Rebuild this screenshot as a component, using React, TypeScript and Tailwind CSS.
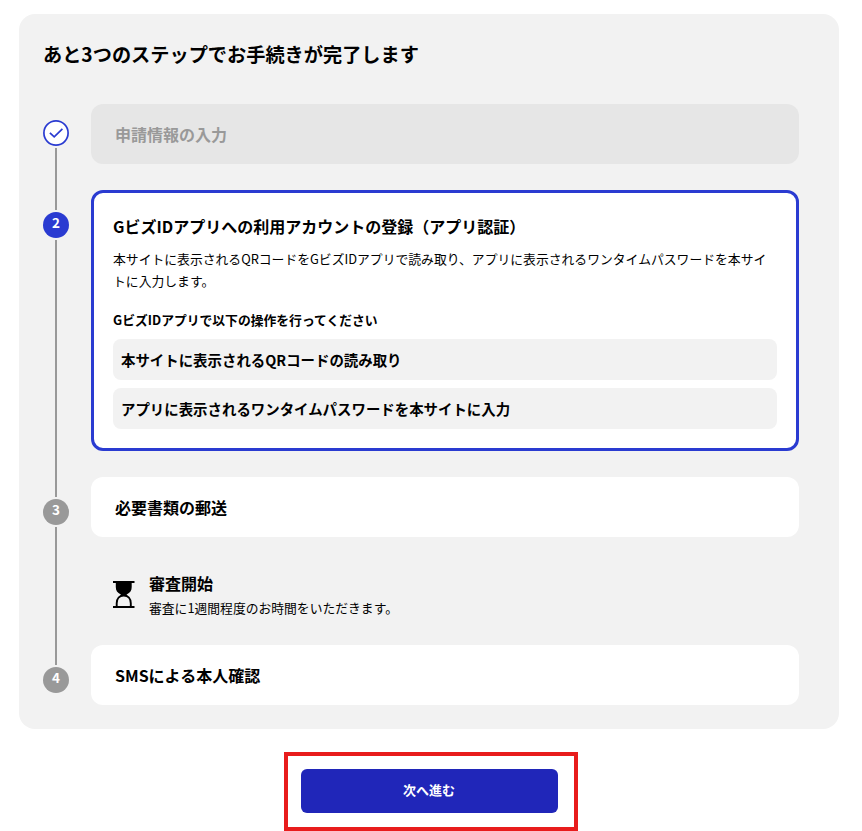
import type { ReactNode } from 'react';
import clsx from 'clsx';

interface MarkerProps {
  status: 'done' | 'current' | 'upcoming';
  children?: ReactNode;
}

function StepMarker({ status, children }: MarkerProps) {
  if (status === 'done') {
    return (
      <svg className="block shrink-0" width="26" height="26" viewBox="0 0 26 26" fill="none">
        <circle cx="13" cy="13" r="12.1" fill="#fff" stroke="#2a3bd1" strokeWidth="1.7" />
        <path d="M6.9 12.8l4.3 4.1 8.2-8.1" stroke="#2a3bd1" strokeWidth="1.7" />
      </svg>
    );
  }

  return (
    <div
      className={clsx(
        'flex h-[26px] w-[26px] shrink-0 justify-center rounded-full text-[13.5px] leading-[21px] font-bold text-white',
        status === 'current' ? 'bg-[#2a3bd1]' : 'bg-[#999999]'
      )}
    >
      {children}
    </div>
  );
}

function Connector({ className }: { className: string }) {
  return <div className={clsx('my-0.5 w-0.5 shrink-0 bg-[#999999]', className)} />;
}

function StepCard({ title, done = false }: { title: string; done?: boolean }) {
  return (
    <div
      className={clsx(
        'flex h-[60px] items-center rounded-xl px-6 text-base font-bold',
        done ? 'bg-[#e6e6e6] text-[#999999]' : 'bg-white'
      )}
    >
      {title}
    </div>
  );
}

function HourglassIcon() {
  return (
    <svg className="mt-1 block shrink-0" width="22" height="27" viewBox="0 0 22 27" fill="none">
      <path d="M2.8 1h15.900v5c0 3.500-1.500 5.700-5 7.500v1H7.800v-1c-3.500-1.800-5-4-5-7.500z" fill="#000" />
      <path
        d="M3.700 26v-3.800c0-4.700 2.800-7.700 7.050-7.700s7.050 3 7.050 7.700V26"
        fill="#f2f2f2"
        stroke="#000"
        strokeWidth="1.900"
      />
      <path d="M0 1h21.500M0 26h21.500" stroke="#000" strokeWidth="2" />
    </svg>
  );
}

const operations = [
  '本サイトに表示されるQRコードの読み取り',
  'アプリに表示されるワンタイムパスワードを本サイトに入力',
];

export default function App() {
  return (
    <div className="h-[831px] w-[862px] overflow-hidden bg-white pt-3.5 pl-[19px] font-['Noto_Sans_CJK_JP',sans-serif] text-black">
      <main className="h-[715px] w-[820px] rounded-2xl bg-[#f2f2f2] pt-6 pr-10 pl-6">
        <h1 className="h-[66px] text-[19.2px] leading-[33px] font-bold">
          あと3つのステップでお手続きが完了します
        </h1>

        <div className="flex gap-[22px]">
          {/* タイムライン */}
          <div className="flex w-[26px] shrink-0 flex-col items-center pt-4">
            <StepMarker status="done" />
            <Connector className="h-[62px]" />
            <StepMarker status="current">2</StepMarker>
            <Connector className="h-[257px]" />
            <StepMarker status="upcoming">3</StepMarker>
            <Connector className="h-[138px]" />
            <StepMarker status="upcoming">4</StepMarker>
          </div>

          <div className="flex w-[708px] flex-col">
            <StepCard title="申請情報の入力" done />

            <section className="my-[26px] h-[261px] rounded-xl border-3 border-[#2a3bd1] bg-white px-[19px] pt-[19px]">
              <h2 className="text-base leading-7 font-bold">
                GビズIDアプリへの利用アカウントの登録（アプリ認証）
              </h2>
              <p className="mt-2 text-[12.82px] leading-[22px]">
                本サイトに表示されるQRコードをGビズIDアプリで読み取り、アプリに表示されるワンタイムパスワードを本サイトに入力します。
              </p>
              <p className="mt-[17px] text-[12.8px] leading-[22px] font-bold">
                GビズIDアプリで以下の操作を行ってください
              </p>
              <ul className="mt-2 flex flex-col gap-2">
                {operations.map(text => (
                  <li
                    key={text}
                    className="h-[41px] rounded-lg bg-[#f2f2f2] px-2 text-[14.43px] leading-[42px] font-bold"
                  >
                    {text}
                  </li>
                ))}
              </ul>
            </section>

            <StepCard title="必要書類の郵送" />

            {/* 審査中の案内 */}
            <div className="flex h-[108px] gap-3.5 pt-10 pl-[22px]">
              <HourglassIcon />
              <div className="-mt-2">
                <p className="text-base leading-7 font-bold">審査開始</p>
                <p className="text-[12.8px] leading-[22px]">
                  審査に1週間程度のお時間をいただきます。
                </p>
              </div>
            </div>

            <StepCard title="SMSによる本人確認" />
          </div>
        </div>
      </main>

      <div className="mt-[23px] ml-[265px] h-[79px] w-[294px] border-4 border-[#e81c1c] pt-[13px] pl-[13px]">
        <button
          type="button"
          className="h-11 w-[257px] rounded-md bg-[#2026b9] pr-px pb-0.5 text-[13px] font-bold text-white"
        >
          次へ進む
        </button>
      </div>
    </div>
  );
}
